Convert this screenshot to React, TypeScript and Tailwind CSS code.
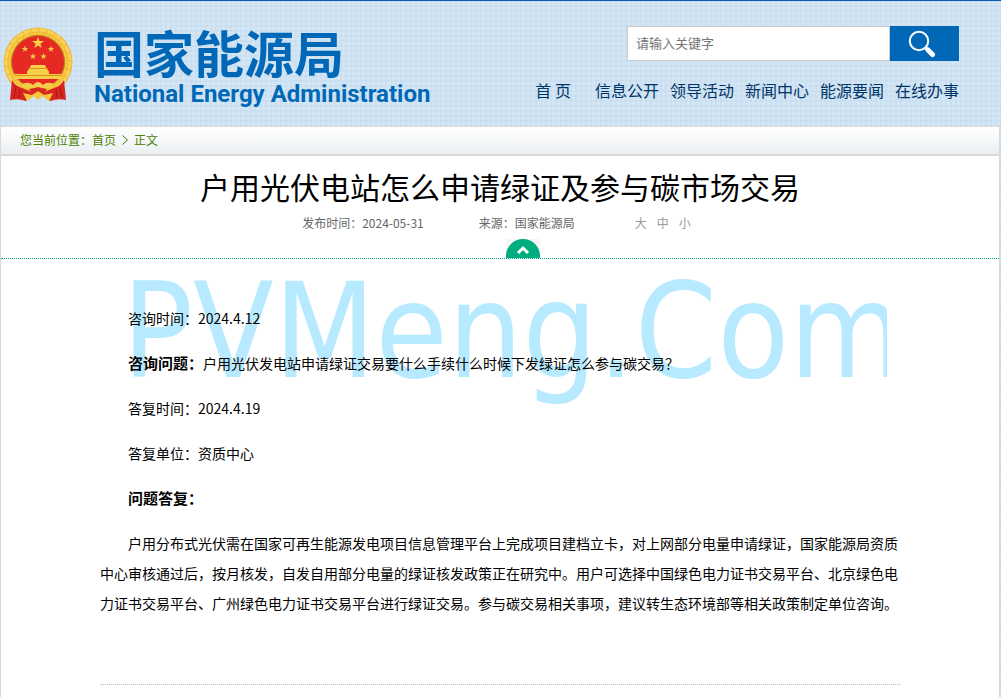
import { useState } from "react";

const navItems = ["首 页", "信息公开", "领导活动", "新闻中心", "能源要闻", "在线办事"];

const sizes = ["大", "中", "小"];

const star = "M0,-10 L2.4,-3.2 L9.5,-3.1 L3.8,1.2 L5.9,8.1 L0,4 L-5.9,8.1 L-3.8,1.2 L-9.5,-3.1 L-2.4,-3.2 Z";

function Emblem() {
  return (
    <svg viewBox="0 0 72 76" className="w-[72px] h-[76px]" aria-hidden="true">
      <circle cx="36" cy="36" r="34.5" fill="#efb436" />
      <circle cx="36" cy="36" r="32" fill="none" stroke="#f8d458" strokeWidth="3" strokeDasharray="7 1" />
      <circle cx="36" cy="36" r="28.5" fill="none" stroke="#f5c83f" strokeWidth="2.5" strokeDasharray="6 1" />
      <circle cx="36" cy="36" r="26.5" fill="#e62a23" stroke="#b9811c" strokeWidth="1" />
      <g fill="#f7cf48">
        <path d={star} transform="translate(36 17) scale(.62)" />
        <path d={star} transform="translate(23 23) scale(.34)" />
        <path d={star} transform="translate(49 23) scale(.34)" />
        <path d={star} transform="translate(31 30.500) scale(.34)" />
        <path d={star} transform="translate(41.500 30.500) scale(.34)" />
        <path d="M28 40.500 L29.500 39 H42.500 L44 40.500 V42 H28 Z" />
        <path d="M27 43 H45 L47 46 H25 Z" />
        <path d="M25 45 H47 V48 H60 L58 53 H14 L12 48 H25 Z" />
      </g>
      <path d="M26 42.500 H46 M13 49.500 H59" stroke="#d5941d" strokeWidth="1" />
      <path d="M10 54 Q13 60 20 62 L32 67 L24 75 Q16 72 8 74 Z" fill="#d9251f" />
      <path d="M62 54 Q59 60 52 62 L40 67 L48 75 Q56 72 64 74 Z" fill="#d9251f" />
      <path d="M14 61 L12 72 M18 63 L17 72 M58 61 L60 72 M54 63 L55 72" stroke="#a8160f" strokeWidth="1" />
      <path d="M20 58 Q27 55 31 59 Q36 53 41 59 Q45 55 52 58 Q47 65 36 61 Q25 65 20 58 Z" fill="#f6cd4a" />
      <path d="M27 63 Q36 61 45 63 L41 69 L36 67 L31 69 Z" fill="#d9251f" />
      <path d="M21 67 L30 69 L36 65 L42 69 L51 67 L47 75 L40 70 L36 74 L32 70 L25 75 Z" fill="#f6c63a" />
    </svg>
  );
}

function SearchIcon() {
  return (
    <svg viewBox="0 0 28 28" className="w-7 h-7" fill="none" stroke="#fff" aria-hidden="true">
      <circle cx="11" cy="11" r="9.200" strokeWidth="2" />
      <path d="M17.500 17.500 L20 20" strokeWidth="3" />
      <path d="M20 20 L24.500 24.500" strokeWidth="5" strokeLinecap="round" />
    </svg>
  );
}

export default function App() {
  const [keyword, setKeyword] = useState("");

  return (
    <div className="min-h-screen flex flex-col bg-[#d3e6f6] bg-[repeating-linear-gradient(0deg,#b7cde033_0_2px,transparent_2px_5px),repeating-linear-gradient(90deg,#b7cde033_0_2px,transparent_2px_5px)] border-t border-[#0a5cb8] font-['Noto_Sans_CJK_SC',sans-serif]">
      {/* Header */}
      <header className="h-[125px] flex justify-between pl-[2px] pr-[42px]">
        <a href="#" className="flex pt-[25px] text-[#0068b7]">
          <Emblem />
          <div className="pl-5">
            <div className="pb-[6px] text-[50px] leading-[50px] font-bold">国家能源局</div>
            <div className="text-2xl leading-6 font-bold font-['Roboto',sans-serif]">
              National Energy Administration
            </div>
          </div>
        </a>

        <div className="flex flex-col items-end pt-[25px]">
          <form className="flex" onSubmit={(e) => e.preventDefault()}>
            <input
              type="text"
              aria-label="请输入关键字"
              placeholder="请输入关键字"
              value={keyword}
              onChange={(e) => setKeyword(e.target.value)}
              className="w-[263px] h-[35px] px-2 pb-[2px] bg-white border border-[#ccc] text-[13px] text-[#333] placeholder:text-[#757575] outline-none"
            />
            <button type="submit" aria-label="搜索" className="w-[69px] h-[35px] pr-[6px] flex items-center justify-center bg-[#0068b7]">
              <SearchIcon />
            </button>
          </form>
          <nav className="flex gap-[11px] pt-[17px] text-base leading-6 text-[#003567]">
            {navItems.map((item, i) => (
              <a key={item} href="#" className={i === 0 ? "mr-[13px]" : ""}>
                {item}
              </a>
            ))}
          </nav>
        </div>
      </header>

      <main className="grow mr-[1px] flex flex-col bg-white border-x border-[#d9d9d9]">
        {/* Breadcrumb */}
        <nav className="h-[30px] pb-[2px] flex items-center gap-[6px] pl-[19px] border-t border-b-2 border-[#d9d9d9] bg-linear-to-b from-white to-[#ebeff2] text-xs text-[#4b8200]">
          <span>
            您当前位置：<a href="#">首页</a>
          </span>
          <svg viewBox="0 0 6 10" className="w-[6px] h-[10px]" fill="none" stroke="currentColor" aria-hidden="true">
            <path d="M.5 .5 L5.500 5 L.5 9.500" />
          </svg>
          <span>正文</span>
        </nav>

        {/* Title and meta */}
        <div className="flex flex-col items-center border-b border-dotted border-[#00a97f]">
          <h1 className="pt-2 text-[30px] leading-[44px] text-black">
            户用光伏电站怎么申请绿证及参与碳市场交易
          </h1>
          <div className="h-[31px] pb-[2px] pr-[7px] flex items-center text-xs text-[#666]">
            <span>发布时间：2024-05-31</span>
            <span className="pl-[55px]">来源：国家能源局</span>
            <div className="flex gap-[10px] pl-[60px] text-[#999]">
              {sizes.map((s) => (
                <button key={s} type="button">
                  {s}
                </button>
              ))}
            </div>
          </div>
          <button type="button" aria-label="收起" className="ml-[46px] w-[34px] h-[19px] bg-[#f5f5f5]">
            <svg viewBox="0 0 34 19" className="w-[34px] h-[19px]" aria-hidden="true">
              <path d="M0 19 V17 A17 17 0 0 1 34 17 V19 Z" fill="#00ad80" />
              <path d="M12 14 L17 9 L22 14" fill="none" stroke="#fff" strokeWidth="3" />
            </svg>
          </button>
        </div>

        {/* Article body */}
        <article className="relative mx-[99px] pt-11 pb-[66px] border-b border-dotted border-[#bbb] text-sm leading-[30px] text-black">
          <div
            aria-hidden="true"
            className="absolute top-0 left-[22px] right-[13px] h-[150px] overflow-hidden whitespace-nowrap text-[131px] leading-[146px] text-[#b7eaff] font-['DejaVu_Sans_Condensed','DejaVu_Sans',sans-serif]"
          >
            PVMeng.Com
          </div>
          <div className="relative flex flex-col gap-[15px]">
            <p className="indent-[28px]">咨询时间：2024.4.12</p>
            <p className="indent-[28px]">
              <strong className="text-[15px]">咨询问题：</strong>
              户用光伏发电站申请绿证交易要什么手续什么时候下发绿证怎么参与碳交易？
            </p>
            <p className="indent-[28px]">答复时间：2024.4.19</p>
            <p className="indent-[28px]">答复单位：资质中心</p>
            <p className="indent-[28px]">
              <strong className="text-[15px]">问题答复：</strong>
            </p>
            <p className="indent-[28px]">
              户用分布式光伏需在国家可再生能源发电项目信息管理平台上完成项目建档立卡，对上网部分电量申请绿证，国家能源局资质中心审核通过后，按月核发，自发自用部分电量的绿证核发政策正在研究中。用户可选择中国绿色电力证书交易平台、北京绿色电力证书交易平台、广州绿色电力证书交易平台进行绿证交易。参与碳交易相关事项，建议转生态环境部等相关政策制定单位咨询。
            </p>
          </div>
        </article>
      </main>
    </div>
  );
}
